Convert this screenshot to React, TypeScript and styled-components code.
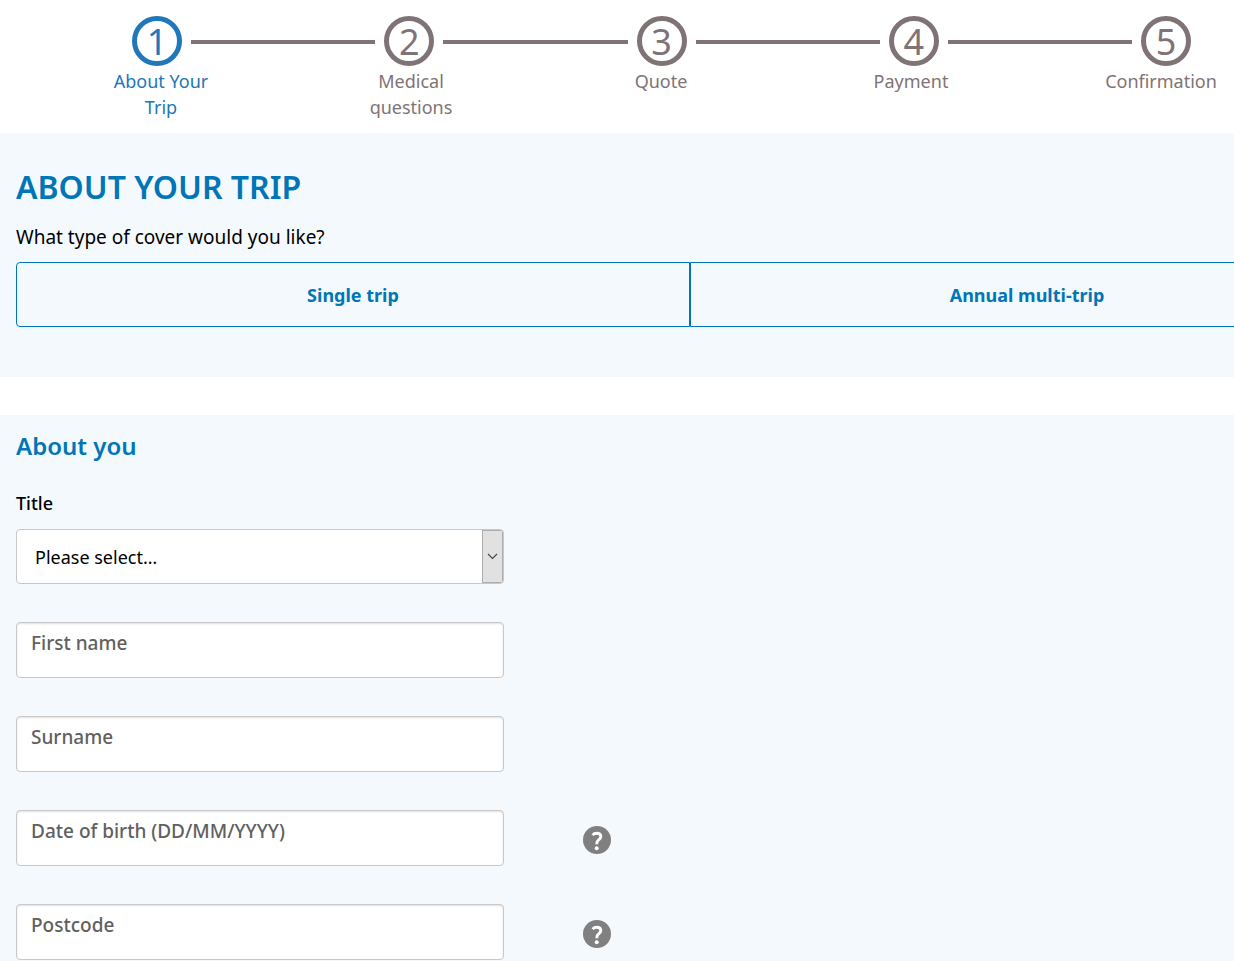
import React from "react";
import styled, { createGlobalStyle, css } from "styled-components";

const blue = "#0076b6";
const activeBlue = "#2077b9";
const grey = "#7f7376";
const panel = "#f4f9fd";

const GlobalStyle = createGlobalStyle`
  * { box-sizing: border-box; }
  body {
    margin: 0;
    background: #fff;
    color: #000;
    font-family: "Noto Sans", sans-serif;
    font-size: 18px;
    line-height: 26px;
    overflow-x: hidden;
  }
`;

const Page = styled.main`
  overflow: hidden;
`;

const Progress = styled.nav`
  height: 133px;
  padding-top: 16px;
`;

const Track = styled.div`
  display: flex;
  align-items: center;
  padding: 0 43px 0 132px;
`;

const Circle = styled.span<{ $active?: boolean }>`
  flex: none;
  display: flex;
  align-items: center;
  justify-content: center;
  width: 50px;
  height: 50px;
  padding-top: 2px;
  border: 5px solid ${(p) => (p.$active ? activeBlue : grey)};
  border-radius: 50%;
  color: ${(p) => (p.$active ? activeBlue : grey)};
  font-size: 36px;
  line-height: 38px;
`;

const Connector = styled.span`
  flex: 1;
  height: 4px;
  margin: 2px 9px 0;
  background: ${grey};
`;

const StepLabels = styled.ol`
  display: flex;
  justify-content: space-between;
  list-style: none;
  margin: 0;
  padding: 2px 16px 0 104px;
`;

const StepLabel = styled.li<{ $active?: boolean }>`
  width: 114px;
  text-align: center;
  color: ${(p) => (p.$active ? activeBlue : grey)};
`;

const CoverSection = styled.section`
  padding: 32px 16px 50px;
  background: ${panel};
`;

const PageTitle = styled.h1`
  margin: 0;
  color: ${blue};
  font-size: 32px;
  font-weight: 600;
  line-height: 44px;
  text-transform: uppercase;
`;

const Question = styled.p`
  margin: 15px 0 12px;
  font-size: 19px;
`;

const CoverOptions = styled.div`
  display: flex;
  margin-right: -146px;
`;

const CoverButton = styled.button`
  flex: 1;
  height: 65px;
  padding: 0;
  border: 1px solid ${blue};
  background: transparent;
  color: ${blue};
  font: inherit;
  font-weight: 700;
  cursor: pointer;
  &:first-child { border-radius: 4px 0 0 4px; }
  &:last-child { border-radius: 0 4px 4px 0; }
`;

const YouSection = styled.section`
  margin-top: 38px;
  padding: 15px 16px 38px;
  background: ${panel};
`;

const SectionTitle = styled.h2`
  margin: 0 0 28px;
  color: ${blue};
  font-size: 24px;
  font-weight: 600;
  line-height: 32px;
`;

const TitleLabel = styled.label`
  display: block;
  margin-bottom: 13px;
  font-weight: 500;
`;

const Fields = styled.div`
  display: flex;
  flex-direction: column;
  gap: 38px;
`;

const FieldRow = styled.div`
  display: flex;
  align-items: center;
  gap: 79px;
`;

const box = css`
  width: 488px;
  height: 56px;
  border: 1px solid #c8c8c8;
  border-radius: 4px;
  background: #fff;
`;

const SelectBox = styled.div`
  ${box}
  height: 55px;
  display: flex;
  position: relative;
  overflow: hidden;
`;

const Select = styled.select`
  flex: 1;
  appearance: none;
  border: 0;
  padding: 0 40px 0 18px;
  background: transparent;
  color: #000;
  font: inherit;
`;

const SelectArrow = styled.span`
  position: absolute;
  inset: 0 0 0 auto;
  width: 21px;
  display: flex;
  align-items: center;
  justify-content: center;
  border: 1px solid #adadad;
  background: #e1e1e1;
  pointer-events: none;
`;

const TextField = styled.label`
  ${box}
  display: flex;
  flex-direction: column;
  padding: 7px 14px 5px;
  box-shadow: inset 0 1px 2px rgba(0, 0, 0, 0.12);
  color: #606060;
  font-size: 19px;
  font-weight: 500;
`;

const TextInput = styled.input`
  width: 100%;
  height: 16px;
  padding: 0;
  border: 0;
  outline: 0;
  background: transparent;
  font: inherit;
  font-size: 14px;
`;

const HelpButton = styled.button`
  width: 28px;
  height: 28px;
  margin-top: 4px;
  padding: 0;
  border: 0;
  border-radius: 50%;
  background: #808080;
  cursor: pointer;
  svg { display: block; }
`;

const steps = ["About Your Trip", "Medical questions", "Quote", "Payment", "Confirmation"];

const fields = [
  { name: "First name", help: false },
  { name: "Surname", help: false },
  { name: "Date of birth (DD/MM/YYYY)", help: true },
  { name: "Postcode", help: true },
];

const HelpIcon = () => (
  <svg width="28" height="28" viewBox="0 0 28 28" aria-hidden="true">
    <path
      d="M9.6 9.1C10.8 7.6 12.3 7.2 13.9 7.2C16.3 7.2 17.8 8.6 17.8 10.5C17.8 13.7 13.8 13.7 13.8 17.4V18.2"
      fill="none"
      stroke="#fff"
      strokeWidth="2.9"
    />
    <circle cx="13.7" cy="22.2" r="2" fill="#fff" />
  </svg>
);

export default function App() {
  return (
    <>
      <GlobalStyle />
      <Page>
        <Progress aria-label="Progress">
          <Track>
            {steps.map((step, i) => (
              <React.Fragment key={step}>
                {i > 0 && <Connector />}
                <Circle $active={i === 0}>{i + 1}</Circle>
              </React.Fragment>
            ))}
          </Track>
          <StepLabels>
            {steps.map((step, i) => (
              <StepLabel key={step} $active={i === 0}>
                {step}
              </StepLabel>
            ))}
          </StepLabels>
        </Progress>

        <CoverSection>
          <PageTitle>About your trip</PageTitle>
          <Question>What type of cover would you like?</Question>
          <CoverOptions>
            <CoverButton type="button">Single trip</CoverButton>
            <CoverButton type="button">Annual multi-trip</CoverButton>
          </CoverOptions>
        </CoverSection>

        <YouSection>
          <SectionTitle>About you</SectionTitle>
          <TitleLabel htmlFor="title">Title</TitleLabel>
          <Fields>
            <SelectBox>
              <Select id="title" defaultValue="">
                <option value="">Please select…</option>
                <option>Mr</option>
                <option>Mrs</option>
                <option>Miss</option>
                <option>Ms</option>
              </Select>
              <SelectArrow>
                <svg width="11" height="7" viewBox="0 0 11 7" aria-hidden="true">
                  <path d="M1 1L5.5 5.5L10 1" fill="none" stroke="#444" strokeWidth="1.1" />
                </svg>
              </SelectArrow>
            </SelectBox>
            {fields.map((field) => (
              <FieldRow key={field.name}>
                <TextField>
                  {field.name}
                  <TextInput type="text" />
                </TextField>
                {field.help && (
                  <HelpButton type="button" aria-label={`Help with ${field.name}`}>
                    <HelpIcon />
                  </HelpButton>
                )}
              </FieldRow>
            ))}
          </Fields>
        </YouSection>
      </Page>
    </>
  );
}
